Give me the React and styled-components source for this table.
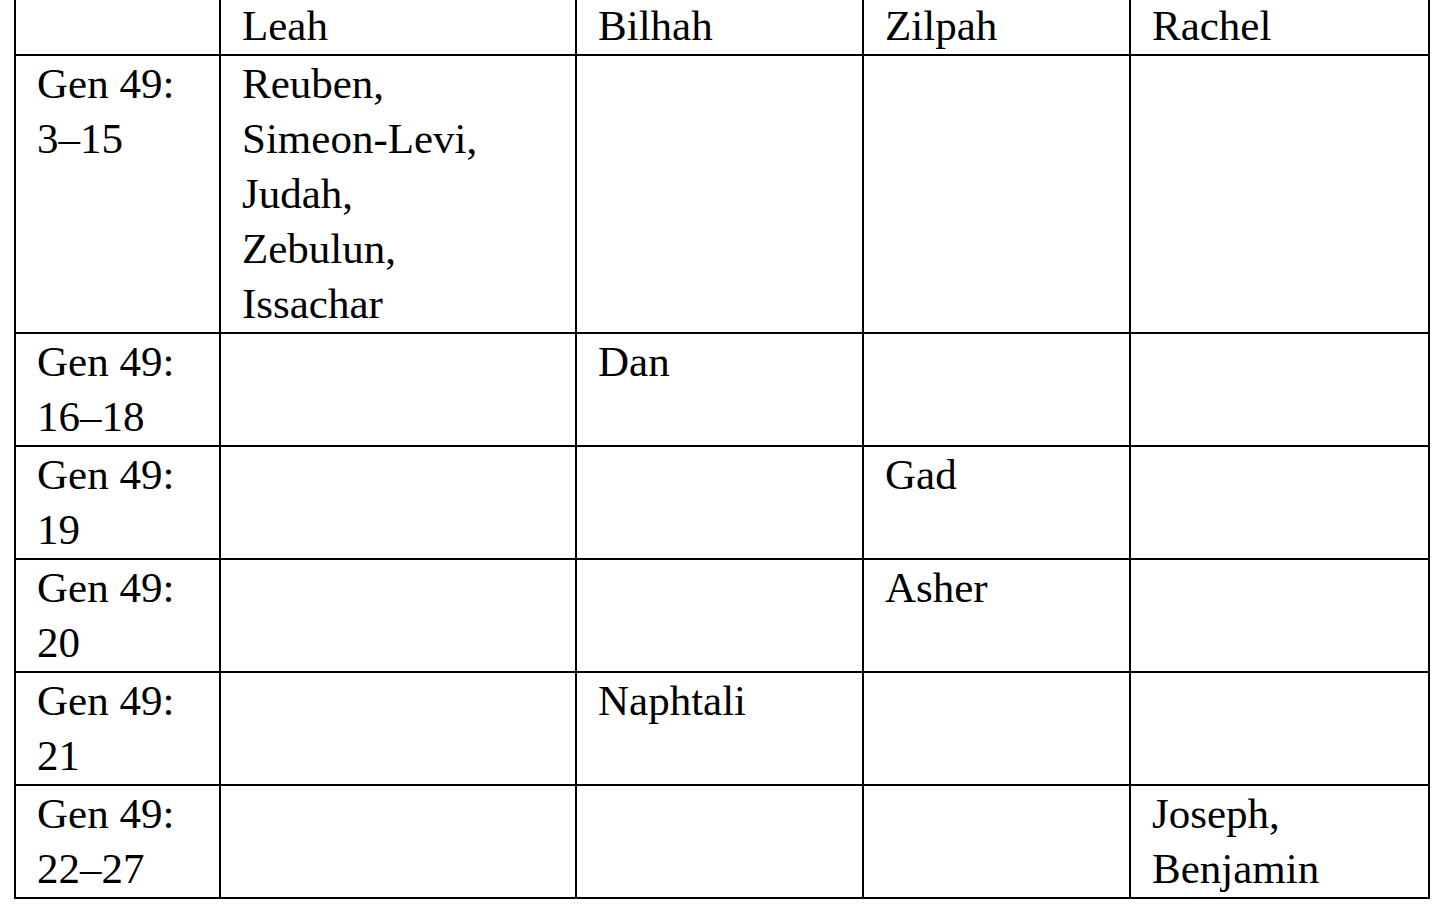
import React from 'react';
import styled, { createGlobalStyle } from 'styled-components';

const GlobalStyle = createGlobalStyle`
  html, body {
    margin: 0;
    padding: 0;
    background: #ffffff;
    overflow: hidden;
  }
  body {
    font-family: 'Liberation Serif', 'Times New Roman', serif;
    color: #000000;
  }
`;

const Page = styled.div`
  padding-left: 14px;
  margin-top: -4px;
`;

const Table = styled.table`
  border-collapse: collapse;
  table-layout: fixed;
  width: 1416px;
  font-size: 43px;
  line-height: 55px;
`;

const Cell = styled.td`
  border: 2px solid #000000;
  padding: 0 20px 1px 21px;
  vertical-align: top;
  text-align: left;
  font-weight: normal;
`;

const HeadCell = styled(Cell).attrs({ as: 'th' })``;

const widths = [205, 356, 287, 267, 299];
const mothers = ['Leah', 'Bilhah', 'Zilpah', 'Rachel'];

const rows = [
  { ref: ['Gen 49:', '3–15'], col: 0, names: ['Reuben,', 'Simeon-Levi,', 'Judah,', 'Zebulun,', 'Issachar'] },
  { ref: ['Gen 49:', '16–18'], col: 1, names: ['Dan'] },
  { ref: ['Gen 49:', '19'], col: 2, names: ['Gad'] },
  { ref: ['Gen 49:', '20'], col: 2, names: ['Asher'] },
  { ref: ['Gen 49:', '21'], col: 1, names: ['Naphtali'] },
  { ref: ['Gen 49:', '22–27'], col: 3, names: ['Joseph,', 'Benjamin'] }
];

const Lines = ({ items }) =>
  items.map((t, i) => (
    <React.Fragment key={i}>
      {i > 0 && <br />}
      {t}
    </React.Fragment>
  ));

const App = () => {
  return (
    <Page>
      <GlobalStyle />
      <Table>
        <colgroup>
          {widths.map((w, i) => (
            <col key={i} style={{ width: w }} />
          ))}
        </colgroup>
        <thead>
          <tr>
            <HeadCell />
            {mothers.map(m => (
              <HeadCell key={m}>{m}</HeadCell>
            ))}
          </tr>
        </thead>
        <tbody>
          {rows.map((r, i) => (
            <tr key={i}>
              <Cell>
                <Lines items={r.ref} />
              </Cell>
              {mothers.map((m, c) => (
                <Cell key={m}>{c === r.col ? <Lines items={r.names} /> : null}</Cell>
              ))}
            </tr>
          ))}
        </tbody>
      </Table>
    </Page>
  );
};

export default App;
